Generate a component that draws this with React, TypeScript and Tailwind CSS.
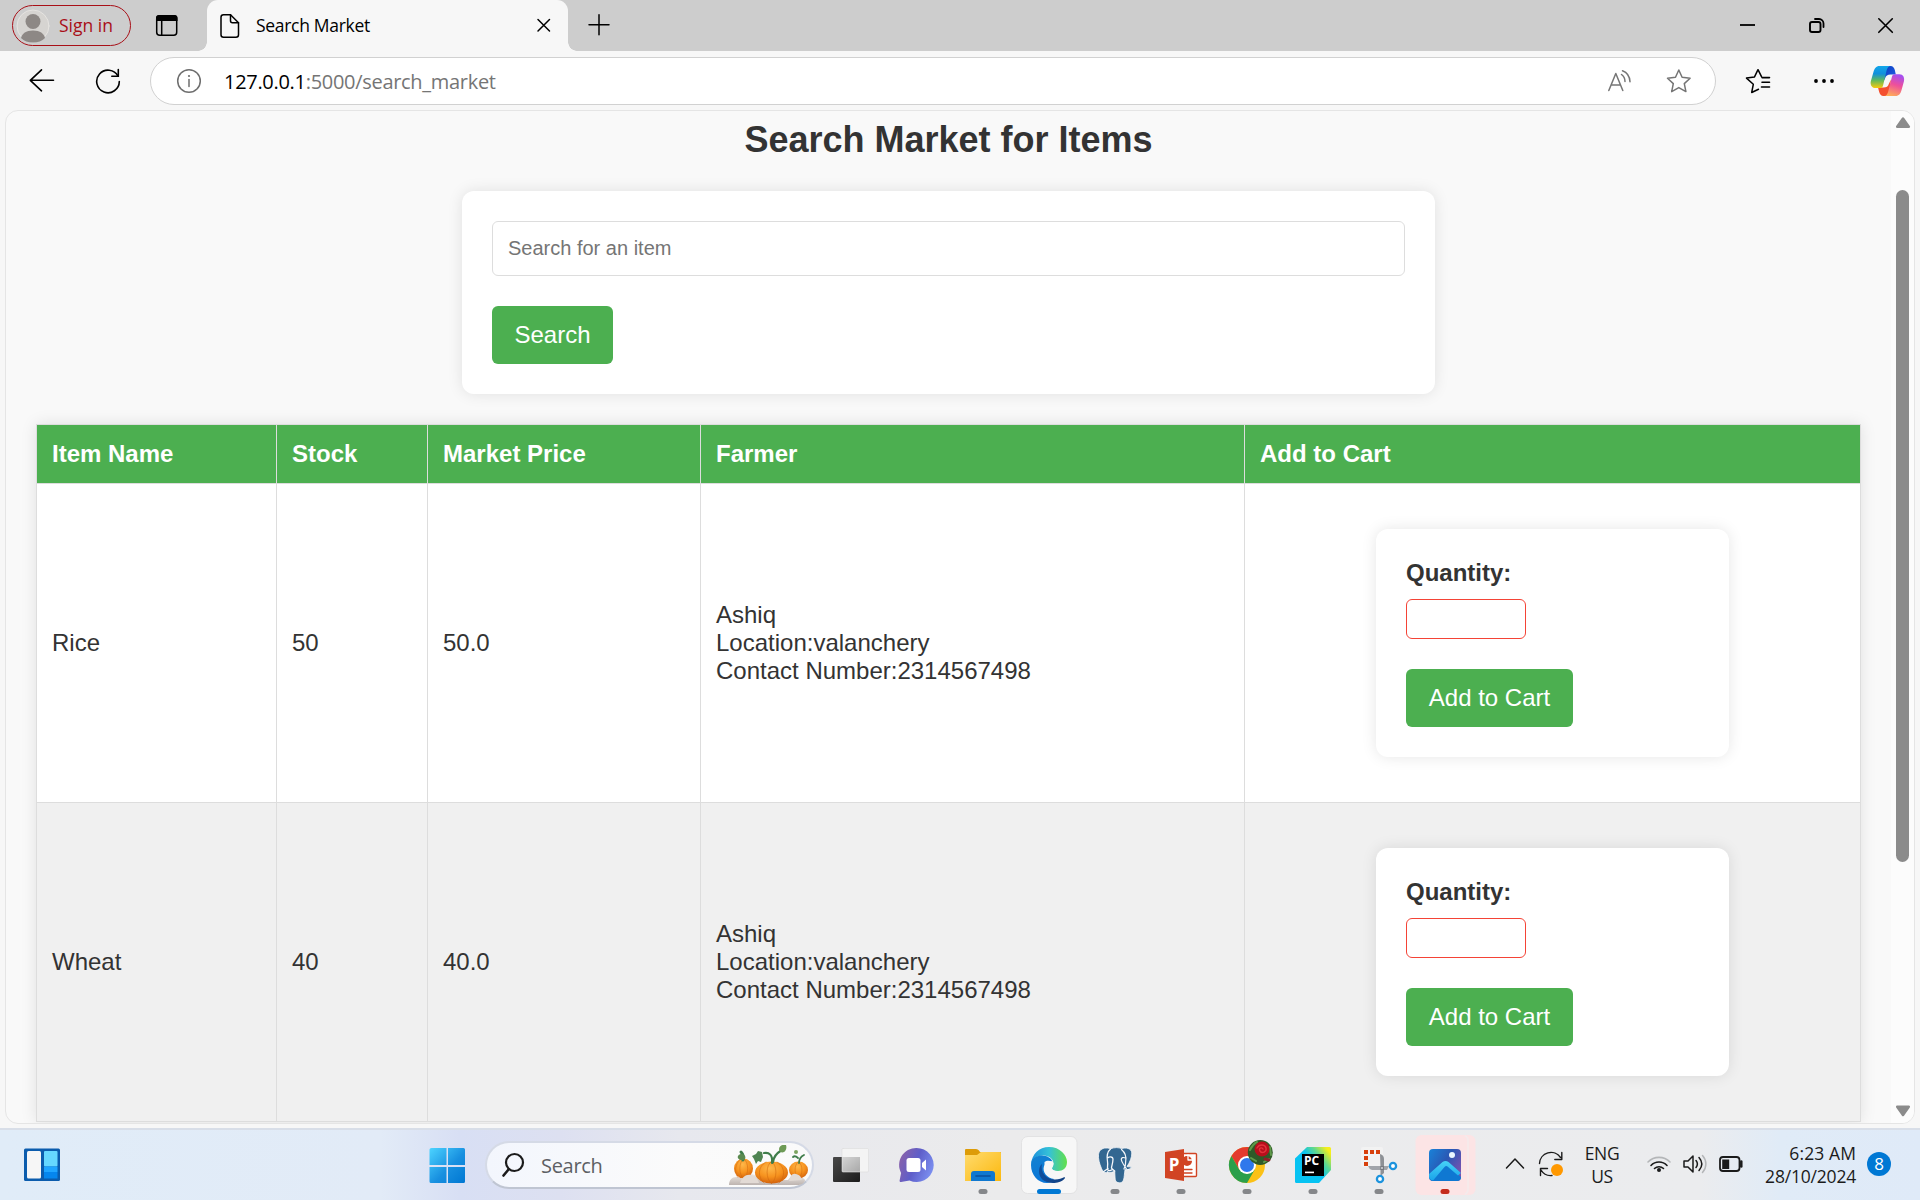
import type { ReactNode } from "react";

type GlyphProps = { box: [number, number, number, number]; className?: string; children: ReactNode };

/* Line or colour drawing whose view box is given in screen units. */
function Glyph({ box, className = "", children }: GlyphProps) {
  return (
    <svg
      width={box[2]}
      height={box[3]}
      viewBox={box.join(" ")}
      fill="none"
      strokeLinecap="round"
      strokeLinejoin="round"
      className={`block shrink-0 ${className}`}
    >
      {children}
    </svg>
  );
}

function TabStrip() {
  return (
    <div className="flex h-[51px] shrink-0 bg-[#cdcdcd]">
      <div className="mt-[5px] ml-3 flex h-[41px] w-[119px] items-center rounded-full border border-[#a80f17] pl-[3px]">
        <Glyph box={[16, 9, 34, 34]}>
          <circle cx="33" cy="26" r="16" fill="#d6d4d1" stroke="#e6e4e1" />
          <ellipse cx="33" cy="21.500" rx="7.500" ry="7.500" fill="#8d8885" />
          <path d="M21 38c1-4.500 5-7.500 12-7.500s11 3 12 7.500c-3 3-7 4.500-12 4.500s-9-1.500-12-4.500z" fill="#8d8885" />
        </Glyph>
        <span className="ml-[9px] text-[17.500px] tracking-[0px] whitespace-nowrap text-[#a80f17]">Sign in</span>
      </div>
      <Glyph box={[155, 14, 24, 24]} className="mt-[14px] ml-[24px]">
        <rect x="156.700" y="15.700" width="20" height="19.500" rx="3" stroke="#000" strokeWidth="1.500" />
        <path d="M156 21v-3a3 3 0 0 1 3-3h15.500a3 3 0 0 1 3 3v3z" fill="#000" />
        <path d="M161.700 21v14" stroke="#000" strokeWidth="1.500" />
      </Glyph>
      <div className="relative ml-[28px] flex h-[51px] w-[361px] items-center rounded-t-[11px] bg-[#f7f7f7]">
        <span className="absolute bottom-0 -left-[9px] h-[9px] w-[9px] bg-[radial-gradient(circle_at_0_0,transparent_8.5px,#f7f7f7_9px)]" />
        <span className="absolute -right-[9px] bottom-0 h-[9px] w-[9px] bg-[radial-gradient(circle_at_100%_0,transparent_8.5px,#f7f7f7_9px)]" />
        <Glyph box={[220, 13, 20, 26]} className="ml-[13px]">
          <path d="M223.500 14.800h7l8 8v11.900a2.500 2.500 0 0 1-2.500 2.500h-12.500a2.500 2.500 0 0 1-2.500-2.500v-17.400a2.500 2.500 0 0 1 2.500-2.500z" stroke="#000" strokeWidth="1.500" />
          <path d="M230.500 14.800v6a2 2 0 0 0 2 2h6" stroke="#000" strokeWidth="1.500" />
        </Glyph>
        <span className="ml-[16px] w-[279px] text-[17.500px] tracking-[-0.3px] text-black">Search Market</span>
        <Glyph box={[536, 19, 16, 16]} className="mt-[1px] ml-[1px]">
          <path d="M538 20.500l11.500 11.500M549.500 20.500l-11.500 11.500" stroke="#000" strokeWidth="1.500" />
        </Glyph>
      </div>
      <Glyph box={[587, 13, 24, 24]} className="mt-[13px] ml-[19px]">
        <path d="M589 24.700h20M599 14.700v20" stroke="#000" strokeWidth="1.500" />
      </Glyph>
      <div className="flex-1" />
      <Glyph box={[1738, 15, 20, 20]} className="mt-[15px] mr-[49px]">
        <path d="M1740 25h15" stroke="#000" strokeWidth="1.800" strokeLinecap="butt" />
      </Glyph>
      <Glyph box={[1807, 15, 20, 20]} className="mt-[15px] mr-[49px]">
        <rect x="1810" y="22" width="10.500" height="10" rx="2" stroke="#000" strokeWidth="1.900" />
        <path d="M1815 19h4a4.500 4.500 0 0 1 4.500 4.500v3.500" stroke="#000" strokeWidth="1.800" />
      </Glyph>
      <Glyph box={[1876, 15, 20, 20]} className="mt-[15px] mr-[24px]">
        <path d="M1878.800 18.800l13.500 13.500M1892.300 18.800l-13.500 13.500" stroke="#000" strokeWidth="1.600" />
      </Glyph>
    </div>
  );
}

function CopilotLogo() {
  return (
    <Glyph box={[1870, 65, 36, 33]}>
      <defs>
        <linearGradient id="cpA" x1="0" y1="0" x2="0" y2="1">
          <stop offset="0" stopColor="#12a7ea" />
          <stop offset=".35" stopColor="#118fdc" />
          <stop offset=".65" stopColor="#5fb95d" />
          <stop offset="1" stopColor="#f9ca0c" />
        </linearGradient>
        <linearGradient id="cpB" x1=".6" y1="0" x2=".3" y2="1">
          <stop offset="0" stopColor="#a54ff0" />
          <stop offset=".45" stopColor="#ee4f9b" />
          <stop offset="1" stopColor="#ffae57" />
        </linearGradient>
        <linearGradient id="cpC" x1="0" y1="0" x2="1" y2="1">
          <stop offset="0" stopColor="#0a3fbf" />
          <stop offset="1" stopColor="#2360e8" />
        </linearGradient>
      </defs>
      <path d="M1885 66h5.500c2.500 0 3.700 1.800 4.300 4l1 4.500h-5.300c-3 0-4.500 1-5.500 4l-2 4z" fill="url(#cpC)" />
      <path d="M1889 96h-5.500c-2.500 0-3.700-1.800-4.300-4l-1.200-4.500h5.500c3 0 4.500-1 5.500-4l2-4z" fill="#f4502f" />
      <path d="M1891 66h-11.500c-3.500 0-5 2.500-5.900 5.500l-2.700 9.500c-1 4 1 7 4.500 7h4.800c1.500 0 2.300-.8 2.800-2.300l3.600-15.200c.7-2.500 1.900-4.500 4.400-4.500z" fill="url(#cpA)" />
      <path d="M1884 96h11.500c3.500 0 5-2.500 5.900-5.500l2.500-9c1-4-.9-7.200-4.400-7.200h-4.700c-1.500 0-2.300.8-2.800 2.300l-3.800 14.900c-.7 2.500-1.700 4.500-4.200 4.500z" fill="url(#cpB)" />
    </Glyph>
  );
}

function Toolbar() {
  return (
    <div className="flex h-[59px] shrink-0 items-start bg-[#f7f7f7]">
      <Glyph box={[28, 67, 28, 28]} className="mt-4 ml-7">
        <path d="M53.500 80.300h-23M41.500 69.800l-11.200 10.500 11.200 10.500" stroke="#000" strokeWidth="1.600" />
      </Glyph>
      <Glyph box={[94, 67, 28, 28]} className="mt-4 ml-[38px]">
        <path d="M118 76.200a11.300 11.300 0 1 0 1.300 5.300" stroke="#000" strokeWidth="1.600" />
        <path d="M118.300 69.500v6.700h-6.500" stroke="#000" strokeWidth="1.600" strokeLinejoin="miter" />
      </Glyph>
      <div className="mt-[6px] ml-[28px] flex h-[48px] w-[1566px] items-center rounded-full border border-[#d1d1d1] bg-white">
        <Glyph box={[176, 68, 26, 26]} className="ml-[25px]">
          <circle cx="189" cy="81" r="11.300" stroke="#6e6e6e" strokeWidth="1.500" />
          <path d="M189 79.500v7" stroke="#6e6e6e" strokeWidth="1.500" />
          <circle cx="189" cy="76" r="1.100" fill="#6e6e6e" />
        </Glyph>
        <span className="mt-[1px] ml-[22px] flex-1 text-[20px] tracking-[-0.3px] text-[#757575]">
          <span className="text-black">127.0.0.1</span>:5000/search_market
        </span>
        <Glyph box={[1606, 67, 28, 26]}>
          <path d="M1608.800 89.500l7-17 7 17M1611 84h9.500" stroke="#757575" strokeWidth="1.500" />
          <path d="M1621.500 73.500c2 1.500 3.500 4 3.500 7M1622.500 69.700c4 1.500 7.200 5.500 7.500 11" stroke="#757575" strokeWidth="1.500" />
        </Glyph>
        <Glyph box={[1665, 67, 28, 28]} className="mr-[22px] ml-[31px]">
          <path d="M1678.800 70l3.300 7.200 8 1-5.800 5.400 1.600 8-7.100-4-7.100 4 1.600-8-5.800-5.400 8-1z" stroke="#757575" strokeWidth="1.500" />
        </Glyph>
      </div>
      <Glyph box={[1744, 67, 28, 28]} className="mt-4 ml-[28px]">
        <path d="M1758.500 89.300l-6.800 3.200 1.600-8.200-6.800-6.200 8-1.200 3.500-7.200 3.500 7" stroke="#000" strokeWidth="1.500" />
        <path d="M1762 77.600h7.500M1762 82.300h7.500M1761.500 87h8" stroke="#000" strokeWidth="1.600" />
      </Glyph>
      <Glyph box={[1810, 67, 28, 28]} className="mt-4 ml-[38px]">
        <circle cx="1816" cy="81" r="1.900" fill="#000" />
        <circle cx="1824" cy="81" r="1.900" fill="#000" />
        <circle cx="1832" cy="81" r="1.900" fill="#000" />
      </Glyph>
      <div className="mt-[14px] ml-8">
        <CopilotLogo />
      </div>
    </div>
  );
}

const rows = [
  { name: "Rice", stock: "50", price: "50.0" },
  { name: "Wheat", stock: "40", price: "40.0" },
];

function CartForm() {
  return (
    <div className="mx-auto h-[228px] w-[353px] rounded-xl bg-white pt-[30px] pl-[30px] shadow-[0_0_15px_rgba(0,0,0,0.1)]">
      <div className="h-[40px] text-[24px] leading-[28px] font-bold">Quantity:</div>
      <div className="h-[40px] w-[120px] rounded-[6px] border border-[#f44336] bg-white" />
      <button className="mt-[30px] block h-[58px] w-[167px] rounded-[6px] bg-[#4caf50] text-[24px] text-white">Add to Cart</button>
    </div>
  );
}

const columns = "grid grid-cols-[240px_151px_273px_544px_616px]";

function MarketTable() {
  const cell = "flex items-center border-r border-b border-[#dddddd] pl-[15px]";
  return (
    <div className="mt-[30px] ml-[30px] w-[1825px] shrink-0 border-t border-l border-[#dddddd] text-[24px] leading-[28px] shadow-[0_0_15px_rgba(0,0,0,0.1)]">
      <div className={`${columns} h-[59px] bg-[#4caf50] font-bold text-white`}>
        <div className={cell}>Item Name</div>
        <div className={cell}>Stock</div>
        <div className={cell}>Market Price</div>
        <div className={cell}>Farmer</div>
        <div className={cell}>Add to Cart</div>
      </div>
      {rows.map((r) => (
        <div key={r.name} className={`${columns} h-[319px] bg-white last:bg-[#f0f0f0]`}>
          <div className={cell}>{r.name}</div>
          <div className={cell}>{r.stock}</div>
          <div className={cell}>{r.price}</div>
          <div className={cell}>
            <div>
              <div>Ashiq</div>
              <div>Location:valanchery</div>
              <div>Contact Number:2314567498</div>
            </div>
          </div>
          <div className="flex items-center border-r border-b border-[#dddddd]">
            <CartForm />
          </div>
        </div>
      ))}
    </div>
  );
}

function Page() {
  return (
    <div className="mx-[5px] flex h-[1014px] w-[1910px] shrink-0 overflow-hidden rounded-[13px] border border-[#e5e5e5] bg-[#f9f9f9] font-['Liberation_Sans',Arial,sans-serif] text-[#333333]">
      <div className="flex h-full w-[1885px] flex-col">
        <h1 className="mt-[8px] ml-[30px] h-[41px] w-[1825px] text-center text-[36px] leading-[41px] font-bold">Search Market for Items</h1>
        <div className="mt-[31px] ml-[456px] h-[203px] w-[973px] shrink-0 rounded-xl bg-white p-[30px] shadow-[0_0_15px_rgba(0,0,0,0.1)]">
          <div className="flex h-[55px] items-center rounded-[6px] border border-[#dddddd] pb-[2px] pl-[15px] text-[20px] text-[#757575]">Search for an item</div>
          <button className="mt-[30px] block h-[58px] w-[121px] rounded-[6px] bg-[#4caf50] text-[24px] text-white">Search</button>
        </div>
        <MarketTable />
      </div>
      <div className="flex w-[23px] flex-col items-center bg-[#fcfcfc]">
        <Glyph box={[1895, 117, 16, 12]} className="mt-[6px]">
          <path d="M1903 118.500l5.800 8.200h-11.600z" fill="#8b8b8b" stroke="#8b8b8b" strokeWidth="2.500" />
        </Glyph>
        <div className="mt-[61px] h-[672px] w-[13px] rounded-full bg-[#8b8b8b]" />
        <Glyph box={[1895, 1104, 16, 13]} className="mt-[242px]">
          <path d="M1903 1115l5.800-8.300h-11.600z" fill="#8b8b8b" stroke="#8b8b8b" strokeWidth="2.500" />
        </Glyph>
      </div>
    </div>
  );
}

function Pumpkins() {
  return (
    <Glyph box={[728, 1146, 82, 40]}>
      <defs>
        <radialGradient id="pk" cx=".45" cy=".3" r=".8">
          <stop offset="0" stopColor="#ffb84a" />
          <stop offset=".5" stopColor="#f6921e" />
          <stop offset="1" stopColor="#c95508" />
        </radialGradient>
        <linearGradient id="stone" x1="0" y1="0" x2="0" y2="1">
          <stop offset="0" stopColor="#f1ebe6" />
          <stop offset="1" stopColor="#bdb4b0" />
        </linearGradient>
      </defs>
      <path d="M729 1186c0-5 3-8 7-8s5 1 6 2c2-5 6-6 10-5s6 4 8 6h28c2-3 5-5 9-4s7 2 8 4c0 3-4 5-8 5z" fill="url(#stone)" />
      <ellipse cx="743.500" cy="1169.500" rx="9.500" ry="10" fill="url(#pk)" />
      <path d="M743.500 1160c-5 3-5 16 0 19.500M744 1160c5 3 5 16 0 19.500M740 1160.500c-5 4-6 14-2 18" stroke="#cf660d" strokeOpacity=".6" strokeWidth=".8" />
      <ellipse cx="798.500" cy="1171" rx="9.500" ry="8.500" fill="url(#pk)" />
      <path d="M798 1163c-4 3-4 13 0 16M799 1163c4 3 4 13 0 16" stroke="#cf660d" strokeOpacity=".6" strokeWidth=".8" />
      <path d="M740 1184c2-6 6-9 11-8s7 5 8 8z" fill="#e2dad5" />
      <path d="M789 1182c1-5 3-8 7-7s5 3 6 6z" fill="#e2dad5" />
      <ellipse cx="771.500" cy="1173.500" rx="16.500" ry="11" fill="url(#pk)" />
      <path d="M771.500 1162.500c-6 3-6 18 0 22M771.500 1162.500c6 3 6 18 0 22M766 1163c-9 5-8 16-2 21M777 1163c9 5 8 16 2 21" stroke="#cf660d" strokeOpacity=".6" strokeWidth=".9" />
      <path d="M743 1161c1-4 0-6-2-8" stroke="#3f7d4a" strokeWidth="3" />
      <path d="M738 1157c2-3 6-2 7 0 1 2 0 4-3 4s-5-2-4-4z" fill="#5a8a4f" />
      <path d="M772 1164c1-8-3-11-8-10M773 1163c1-8 6-10 9-12" stroke="#3f7d4a" strokeWidth="2.200" />
      <path d="M752 1157l4-2 2-3 4 1 1 5-2 5-3-1-2 3-2-5z" fill="#4f8452" />
      <path d="M779 1150c0-3 4-5 7-4 1 3 0 6-2 7s-5 0-5-3z" fill="#6d9a55" />
      <path d="M799 1164c0-4 1-6 5-8M798 1159c-2-2-4-2-5-1" stroke="#3f7d4a" strokeWidth="1.800" />
      <circle cx="796" cy="1153" r="2" fill="#7ba35f" />
    </Glyph>
  );
}

function AppSlot({ left, width = 66, dot, children }: { left: number; width?: number; dot?: string; children: ReactNode }) {
  return (
    <Glyph box={[left, 1130, width, 70]}>
      {children}
      {dot && <rect x={left + 28.5} y="1189" width="9" height="5" rx="2.500" fill={dot} />}
    </Glyph>
  );
}

function AppIcons() {
  const grey = "#85878a";
  return (
    <>
      <AppSlot left={817}>
        <defs>
          <linearGradient id="tvD" x1="0" y1="0" x2="1" y2="1">
            <stop stopColor="#484848" />
            <stop offset="1" stopColor="#1b1b1b" />
          </linearGradient>
          <linearGradient id="tvL" x1="0" y1="0" x2="1" y2="1">
            <stop stopColor="#d4d4d4" />
            <stop offset="1" stopColor="#a9a9a9" />
          </linearGradient>
        </defs>
        <rect x="833" y="1157" width="27" height="25" rx="1" fill="url(#tvD)" />
        <rect x="842" y="1148.500" width="26.500" height="23.500" rx="1" fill="#f4f4f4" stroke="#dcdcdc" strokeWidth=".6" />
        <rect x="842.300" y="1157" width="17.700" height="14.700" fill="url(#tvL)" />
      </AppSlot>
      <AppSlot left={883} width={67}>
        <defs>
          <linearGradient id="chat" x1="0" y1=".2" x2="1" y2=".6">
            <stop stopColor="#8c62a8" />
            <stop offset=".5" stopColor="#5e5ec9" />
            <stop offset="1" stopColor="#7b8ff0" />
          </linearGradient>
        </defs>
        <path d="M916.500 1148a17 17 0 1 1-7 32.400l-8.500 1.600c-1 .2-1.600-.6-1.400-1.500l1.500-7.500a17 17 0 0 1 15.400-25z" fill="url(#chat)" />
        <rect x="906.500" y="1158" width="14" height="14" rx="2.500" fill="#fff" />
        <path d="M922 1163l4-3.500v11l-4-3.500z" fill="#fff" />
      </AppSlot>
      <AppSlot left={950} dot={grey}>
        <defs>
          <linearGradient id="fold" x1="0" y1="0" x2="1" y2="1">
            <stop stopColor="#ffdb6e" />
            <stop offset="1" stopColor="#fbb80e" />
          </linearGradient>
        </defs>
        <path d="M965 1150q0-1 1-1h10q2 0 3 1.500l1 1.500h21v6h-36z" fill="#dd9c08" />
        <path d="M965 1155h12l4-3h19q1 0 1 1v28h-36z" fill="url(#fold)" />
        <path d="M971 1181v-7q0-3 3-3h18q3 0 3 3v7z" fill="#1078d0" />
        <path d="M976 1176h14" stroke="#0a4f9c" strokeWidth="1.600" />
      </AppSlot>
      <AppSlot left={1016}>
        <defs>
          <linearGradient id="edT" x1="0" y1=".5" x2="1" y2=".5">
            <stop stopColor="#1b8fdc" />
            <stop offset=".5" stopColor="#35c1d8" />
            <stop offset="1" stopColor="#62e04a" />
          </linearGradient>
          <linearGradient id="edL" x1="0" y1="0" x2=".3" y2="1">
            <stop stopColor="#1482d0" />
            <stop offset="1" stopColor="#0a76d8" />
          </linearGradient>
          <linearGradient id="edD" x1="0" y1="0" x2="1" y2="0">
            <stop stopColor="#0f4f9e" />
            <stop offset="1" stopColor="#123f80" />
          </linearGradient>
        </defs>
        <rect x="1021.500" y="1136.500" width="55.500" height="57" rx="6" fill="#f7f7f7" stroke="#e2e2e3" />
        <path d="M1031 1164c1-10 8-17 18-17 11 0 18 8 18 15 0 6-4 9-9 9-4 0-6-1-6-2.500s1.500-2 1.500-5c0-4-4-8-10-8-6 0-10 3-12.500 8.500z" fill="url(#edT)" />
        <path d="M1031 1165c0-6 5-9.500 10.500-9.500 6 0 10 3 11 6-3-1-7 1-8.500 4.500-2 6 3 12 10 13-2 2.500-4 4-7 4-9 0-16-8-16-18z" fill="url(#edL)" />
        <path d="M1042 1164c-2 8 4 15.500 13 15.500 4 0 7-1 9-2.200 1-.5 1.300.3.700 1.200-3 3.500-7.700 4.500-11.700 4.500-9 0-14-5-14-11.500 0-3.500 1-6 3-7.500z" fill="url(#edD)" />
        <path d="M1044.500 1162c2.500-2 8-1.500 9 1.500 0 3-1.700 3.700-1.500 5 .3 2 3 2.700 6 2.700-2 1.300-6 1.600-9 0-3.500-2-5-5.700-4.500-9.200z" fill="#f7f7f7" />
        <rect x="1037" y="1189" width="24" height="5" rx="2.500" fill="#0078d4" />
      </AppSlot>
      <AppSlot left={1082} dot={grey}>
        <path d="M1107.500 1172c-2.500 1.500-4.500 0-6-3.500-2-4.500-3.500-10-3-14 .4-4 3.500-6.500 7.500-6.500 2 0 3.500.4 4.500.8 2-.8 4-1.200 6-1.200s3.500.4 5 1c4-1.300 10-.5 10.300 4.400.2 4-2 9.500-4.800 13.500 1.500.5 3.500.3 4.500.2-.5 2-3.500 3.300-6.500 3.300-.8 4-.5 7-1.500 10-.7 2-2 2.800-4 2.800s-4-.8-4.300-3.500c-.4-3-.2-5.500-.5-8.300-2.500 1.500-4.500 1.800-7.200 1z" fill="#336791" stroke="#f5f7fa" strokeWidth=".8" />
        <path d="M1110.500 1149c-3.500 3-4 7-3 12.500.6 3.500-.5 5.500.2 8 .5 1.500 2.500 1.500 4.300.3M1107.500 1158c2-1.500 5.500-1.500 5.500 1 0 3-1 6-1.500 8.500-.2 1.500 1.500 2 3.200 3.500" stroke="#f5f7fa" strokeWidth="1.300" />
        <path d="M1121.500 1149.500c3.500 3 5 7 4.200 11.500-.4 3 .3 5-1.700 7.500M1125.500 1158c-2-1-4.500-.5-4.200 1.500.4 3 3 6 5 9M1124 1169l5 .5" stroke="#f5f7fa" strokeWidth="1.200" />
        <path d="M1103 1172l5-3.500" stroke="#f5f7fa" strokeWidth="1.200" />
      </AppSlot>
      <AppSlot left={1148} dot={grey}>
        <rect x="1180" y="1153.500" width="16.500" height="23" rx="1" fill="#fff" stroke="#d14424" strokeWidth="1.400" />
        <circle cx="1187" cy="1161" r="5" fill="#d14424" />
        <path d="M1188 1155v5h5.500" stroke="#fff" strokeWidth="1.300" />
        <path d="M1183 1169.500h9M1183 1173h9" stroke="#d14424" strokeWidth="1.300" />
        <path d="M1165 1152l19-3v32l-19-3z" fill="#d14424" />
        <text x="1168.800" y="1171" fontSize="17" fontWeight="700" fill="#fff" fontFamily="Open Sans, sans-serif">P</text>
      </AppSlot>
      <AppSlot left={1214} dot={grey}>
        <circle cx="1247" cy="1165" r="18" fill="#fbc116" />
        <path d="M1231.400 1156a18 18 0 0 1 31.200 0h-15.600l-7.800 13.500z" fill="#e33b2e" />
        <path d="M1231.400 1156a18 18 0 0 0 15.600 27l7.800-13.500-7.800 4.500-7.800-4.500z" fill="#2c9f4b" />
        <circle cx="1247" cy="1165" r="9" fill="#fff" />
        <circle cx="1247" cy="1165" r="7" fill="#2f78ec" />
        <circle cx="1260.300" cy="1152.500" r="12.500" fill="#2f5a28" />
        <path d="M1250 1150q3-6 7-8M1251 1158l5 3M1264 1162l5-3M1270 1147l1 8" stroke="#5f9a4a" strokeWidth="2" />
        <circle cx="1262" cy="1149" r="7.500" fill="#b80f1c" />
        <path d="M1257 1148c2-4 8-4 9 0s-4 6-6 3 2-4 3-2" stroke="#e2323c" strokeWidth="1.400" />
        <path d="M1265 1159l4 1" stroke="#8c2028" strokeWidth="3" />
      </AppSlot>
      <AppSlot left={1280} dot={grey}>
        <defs>
          <linearGradient id="pyc" x1=".1" y1=".8" x2="1" y2=".1">
            <stop offset=".45" stopColor="#07c3f2" />
            <stop offset=".7" stopColor="#5fd88e" />
            <stop offset=".95" stopColor="#f6ee1c" />
          </linearGradient>
        </defs>
        <path d="M1307 1147h22.500q1.500 0 1.500 1.500v21.500l-12 13h-22.500q-1.500 0-1.500-1.500v-23z" fill="url(#pyc)" />
        <path d="M1302 1154h22v22h-22z" fill="#000" />
        <text x="1304" y="1165" fontSize="12" fontWeight="700" fill="#fff" fontFamily="Open Sans, sans-serif">PC</text>
        <path d="M1305 1172.400h9" stroke="#fff" strokeWidth="1.600" strokeLinecap="butt" />
      </AppSlot>
      <AppSlot left={1346} dot={grey}>
        <rect x="1361" y="1147" width="22" height="20" rx="2" fill="#f2f2f2" />
        <path d="M1364 1152h17" stroke="#d8400c" strokeWidth="4" strokeDasharray="4 2" strokeLinecap="butt" />
        <path d="M1366 1156v11" stroke="#d8400c" strokeWidth="4" strokeDasharray="4 2" strokeLinecap="butt" />
        <path d="M1380 1154q4 1 4 5v14l-3.500 3v-8z" fill="#8e9196" />
        <path d="M1368 1166h21l-2 4h-15q-3-1-4-4z" fill="#a2a5aa" />
        <path d="M1380.300 1166h3.700v4h-3.700z" fill="#777a80" />
        <circle cx="1382" cy="1168" r="1" fill="#d5d7da" />
        <circle cx="1393" cy="1166" r="3.100" fill="#fff" stroke="#1c93dd" strokeWidth="2.300" />
        <circle cx="1380" cy="1179" r="3.100" fill="#fff" stroke="#1c93dd" strokeWidth="2.300" />
      </AppSlot>
      <AppSlot left={1412} dot="#c42b1c">
        <defs>
          <linearGradient id="phB" x1="0" y1=".1" x2="1" y2=".7">
            <stop stopColor="#1a7fd6" />
            <stop offset=".5" stopColor="#2a58b4" />
            <stop offset="1" stopColor="#7a52b0" />
          </linearGradient>
          <linearGradient id="phM" x1="0" y1="0" x2="0" y2="1">
            <stop stopColor="#46d3f7" />
            <stop offset="1" stopColor="#1aa4ea" />
          </linearGradient>
        </defs>
        <rect x="1415.500" y="1135" width="60" height="60" rx="6" fill="#fce4e5" />
        <path d="M1465.500 1136c2.500 2 2.500 3 2.500 6v46c0 3 0 4-2.500 6" stroke="#f4ebec" strokeWidth="1.600" />
        <rect x="1429" y="1149" width="32" height="32" rx="4" fill="url(#phB)" />
        <path d="M1431 1180l15-15.500 15 12.500q0 4-4 4h-24q-1.500 0-2-1z" fill="#0f78d2" />
        <path d="M1429 1174l13.500-12q3-2 6 0l12.500 11-3 2.500-10.500-9q-1.500-1-3 .5l-11.500 13.500q-4-.5-4-4z" fill="url(#phM)" />
        <circle cx="1452" cy="1155" r="3" fill="#eaf6ff" />
      </AppSlot>
    </>
  );
}

function Tray() {
  return (
    <>
      <Glyph box={[1504, 1155, 22, 18]} className="mt-[25px] ml-[26px]">
        <path d="M1506.500 1168l8.500-9 8.500 9" stroke="#1b1b1b" strokeWidth="1.500" />
      </Glyph>
      <Glyph box={[1538, 1150, 27, 28]} className="mt-5 ml-3">
        <path d="M1539.500 1163.500a11.500 11.500 0 0 1 21-6M1561.800 1152.500v7h-7M1540.500 1175.500v-7h7M1541 1170a11.500 11.500 0 0 0 11 5.500" stroke="#1b1b1b" strokeWidth="1.400" />
        <circle cx="1557" cy="1170" r="6" fill="#ff9800" />
      </Glyph>
      <div className="mt-[12px] ml-[16px] flex w-[42px] flex-col items-center text-[17.500px] leading-[23px] tracking-[-0.4px]">
        <span>ENG</span>
        <span>US</span>
      </div>
      <Glyph box={[1645, 1152, 28, 24]} className="mt-[22px] ml-[22px]">
        <path d="M1648 1162a15.500 15.500 0 0 1 22 0" stroke="#b4b6b8" strokeWidth="1.600" />
        <path d="M1651 1165.500a11 11 0 0 1 16 0M1654.500 1168.500a6.500 6.500 0 0 1 9 0" stroke="#1b1b1b" strokeWidth="1.600" />
        <circle cx="1659" cy="1170" r="2" fill="#1b1b1b" />
      </Glyph>
      <Glyph box={[1682, 1152, 26, 24]} className="mt-[22px] ml-[9px]">
        <path d="M1684 1161h4l5-5v16l-5-5h-4z" stroke="#1b1b1b" strokeWidth="1.500" />
        <path d="M1696 1160.500c1.600 2 1.600 5 0 7M1699 1157.500c3.500 4 3.500 9 0 13" stroke="#1b1b1b" strokeWidth="1.500" />
        <path d="M1702.500 1155.500c4.500 5 4.500 12 0 17" stroke="#b4b6b8" strokeWidth="1.500" />
      </Glyph>
      <Glyph box={[1718, 1154, 26, 20]} className="mt-6 ml-[10px]">
        <rect x="1720" y="1157" width="19.500" height="14" rx="3" stroke="#1b1b1b" strokeWidth="1.800" />
        <rect x="1722.200" y="1159.500" width="7" height="9.500" fill="#1b1b1b" />
        <path d="M1741.300 1161.500v5" stroke="#1b1b1b" strokeWidth="2.500" />
      </Glyph>
      <div className="mt-[12px] ml-[12px] flex w-[100px] flex-col items-end text-[17.500px] leading-[23px] tracking-[-0.2px] whitespace-nowrap">
        <span className="tracking-[0.100px]">6:23 AM</span>
        <span>28/10/2024</span>
      </div>
      <div className="mt-[22px] ml-[11px] flex h-6 w-6 shrink-0 items-center justify-center rounded-full bg-[#0078d4] text-[17px] text-white">8</div>
    </>
  );
}

function Taskbar() {
  return (
    <div className="flex h-[72px] shrink-0 items-start overflow-hidden border-t-2 border-[#d8dee8] bg-[linear-gradient(90deg,#e0ecf8_0px,#e2ebf7_380px,#d8dff4_460px,#dde0f1_560px,#e7e8ee_680px,#ebebec_1000px,#ebecee_1700px,#e0ebf7_1780px,#dfeaf8_1920px)] text-[#1b1b1b]">
      <Glyph box={[23, 1147, 40, 36]} className="mt-[17px] ml-[23px]">
        <rect x="24" y="1148.500" width="36" height="32.500" rx="1.500" fill="#0b5cad" />
        <rect x="27" y="1151" width="14" height="27.500" rx="1.500" fill="#f6f6f6" />
        <rect x="44" y="1151" width="13.500" height="15.500" rx="1" fill="#66d8ff" />
        <rect x="44" y="1166.500" width="13.500" height="5.500" fill="#1fa5ff" />
        <rect x="44" y="1172" width="13.500" height="6.500" fill="#0586ee" />
      </Glyph>
      <Glyph box={[429, 1147, 37, 37]} className="mt-[17px] ml-[366px]">
        <defs>
          <linearGradient id="win" gradientUnits="userSpaceOnUse" x1="430" y1="1148" x2="465" y2="1183">
            <stop stopColor="#4cd3ff" />
            <stop offset=".55" stopColor="#1890e0" />
            <stop offset="1" stopColor="#0077d2" />
          </linearGradient>
        </defs>
        <path d="M431.500 1148h15v17h-17v-15.500q0-1.500 2-1.500zM448 1148h15.500q1.500 0 1.500 1.500v15.500h-17zM429.500 1167h17v16h-15.500q-1.500 0-1.500-1.500zM448 1167h17v14.500q0 1.500-1.500 1.500h-15.500z" fill="url(#win)" />
      </Glyph>
      <div className="mt-[11px] ml-[19px] flex h-[48px] w-[329px] shrink-0 items-center rounded-full border-2 border-[#d5dae6] border-b-[#bfc5d2] bg-[linear-gradient(90deg,#f3f6fd,#fbfbfb_60%,#fafafa)]">
        <Glyph box={[502, 1152, 26, 26]} className="ml-[14px]">
          <circle cx="515.500" cy="1162.500" r="8.500" stroke="#1b1b1b" strokeWidth="2.200" />
          <path d="M509.500 1169.500l-5 6" stroke="#1b1b1b" strokeWidth="2.600" />
        </Glyph>
        <span className="mt-[1px] ml-[14px] flex-1 text-[20px] tracking-[-0.3px] text-[#5d5f64]">Search</span>
        <Pumpkins />
        <span className="w-[2px]" />
      </div>
      <div className="ml-[3px] flex w-[661px] shrink-0">
        <AppIcons />
      </div>
      <Tray />
    </div>
  );
}

export default function App() {
  return (
    <div className="flex h-[1200px] w-[1920px] flex-col overflow-hidden bg-[#f7f7f7] font-['Open_Sans','Noto_Sans',sans-serif]">
      <TabStrip />
      <Toolbar />
      <Page />
      <div className="h-[4px] shrink-0" />
      <Taskbar />
    </div>
  );
}
